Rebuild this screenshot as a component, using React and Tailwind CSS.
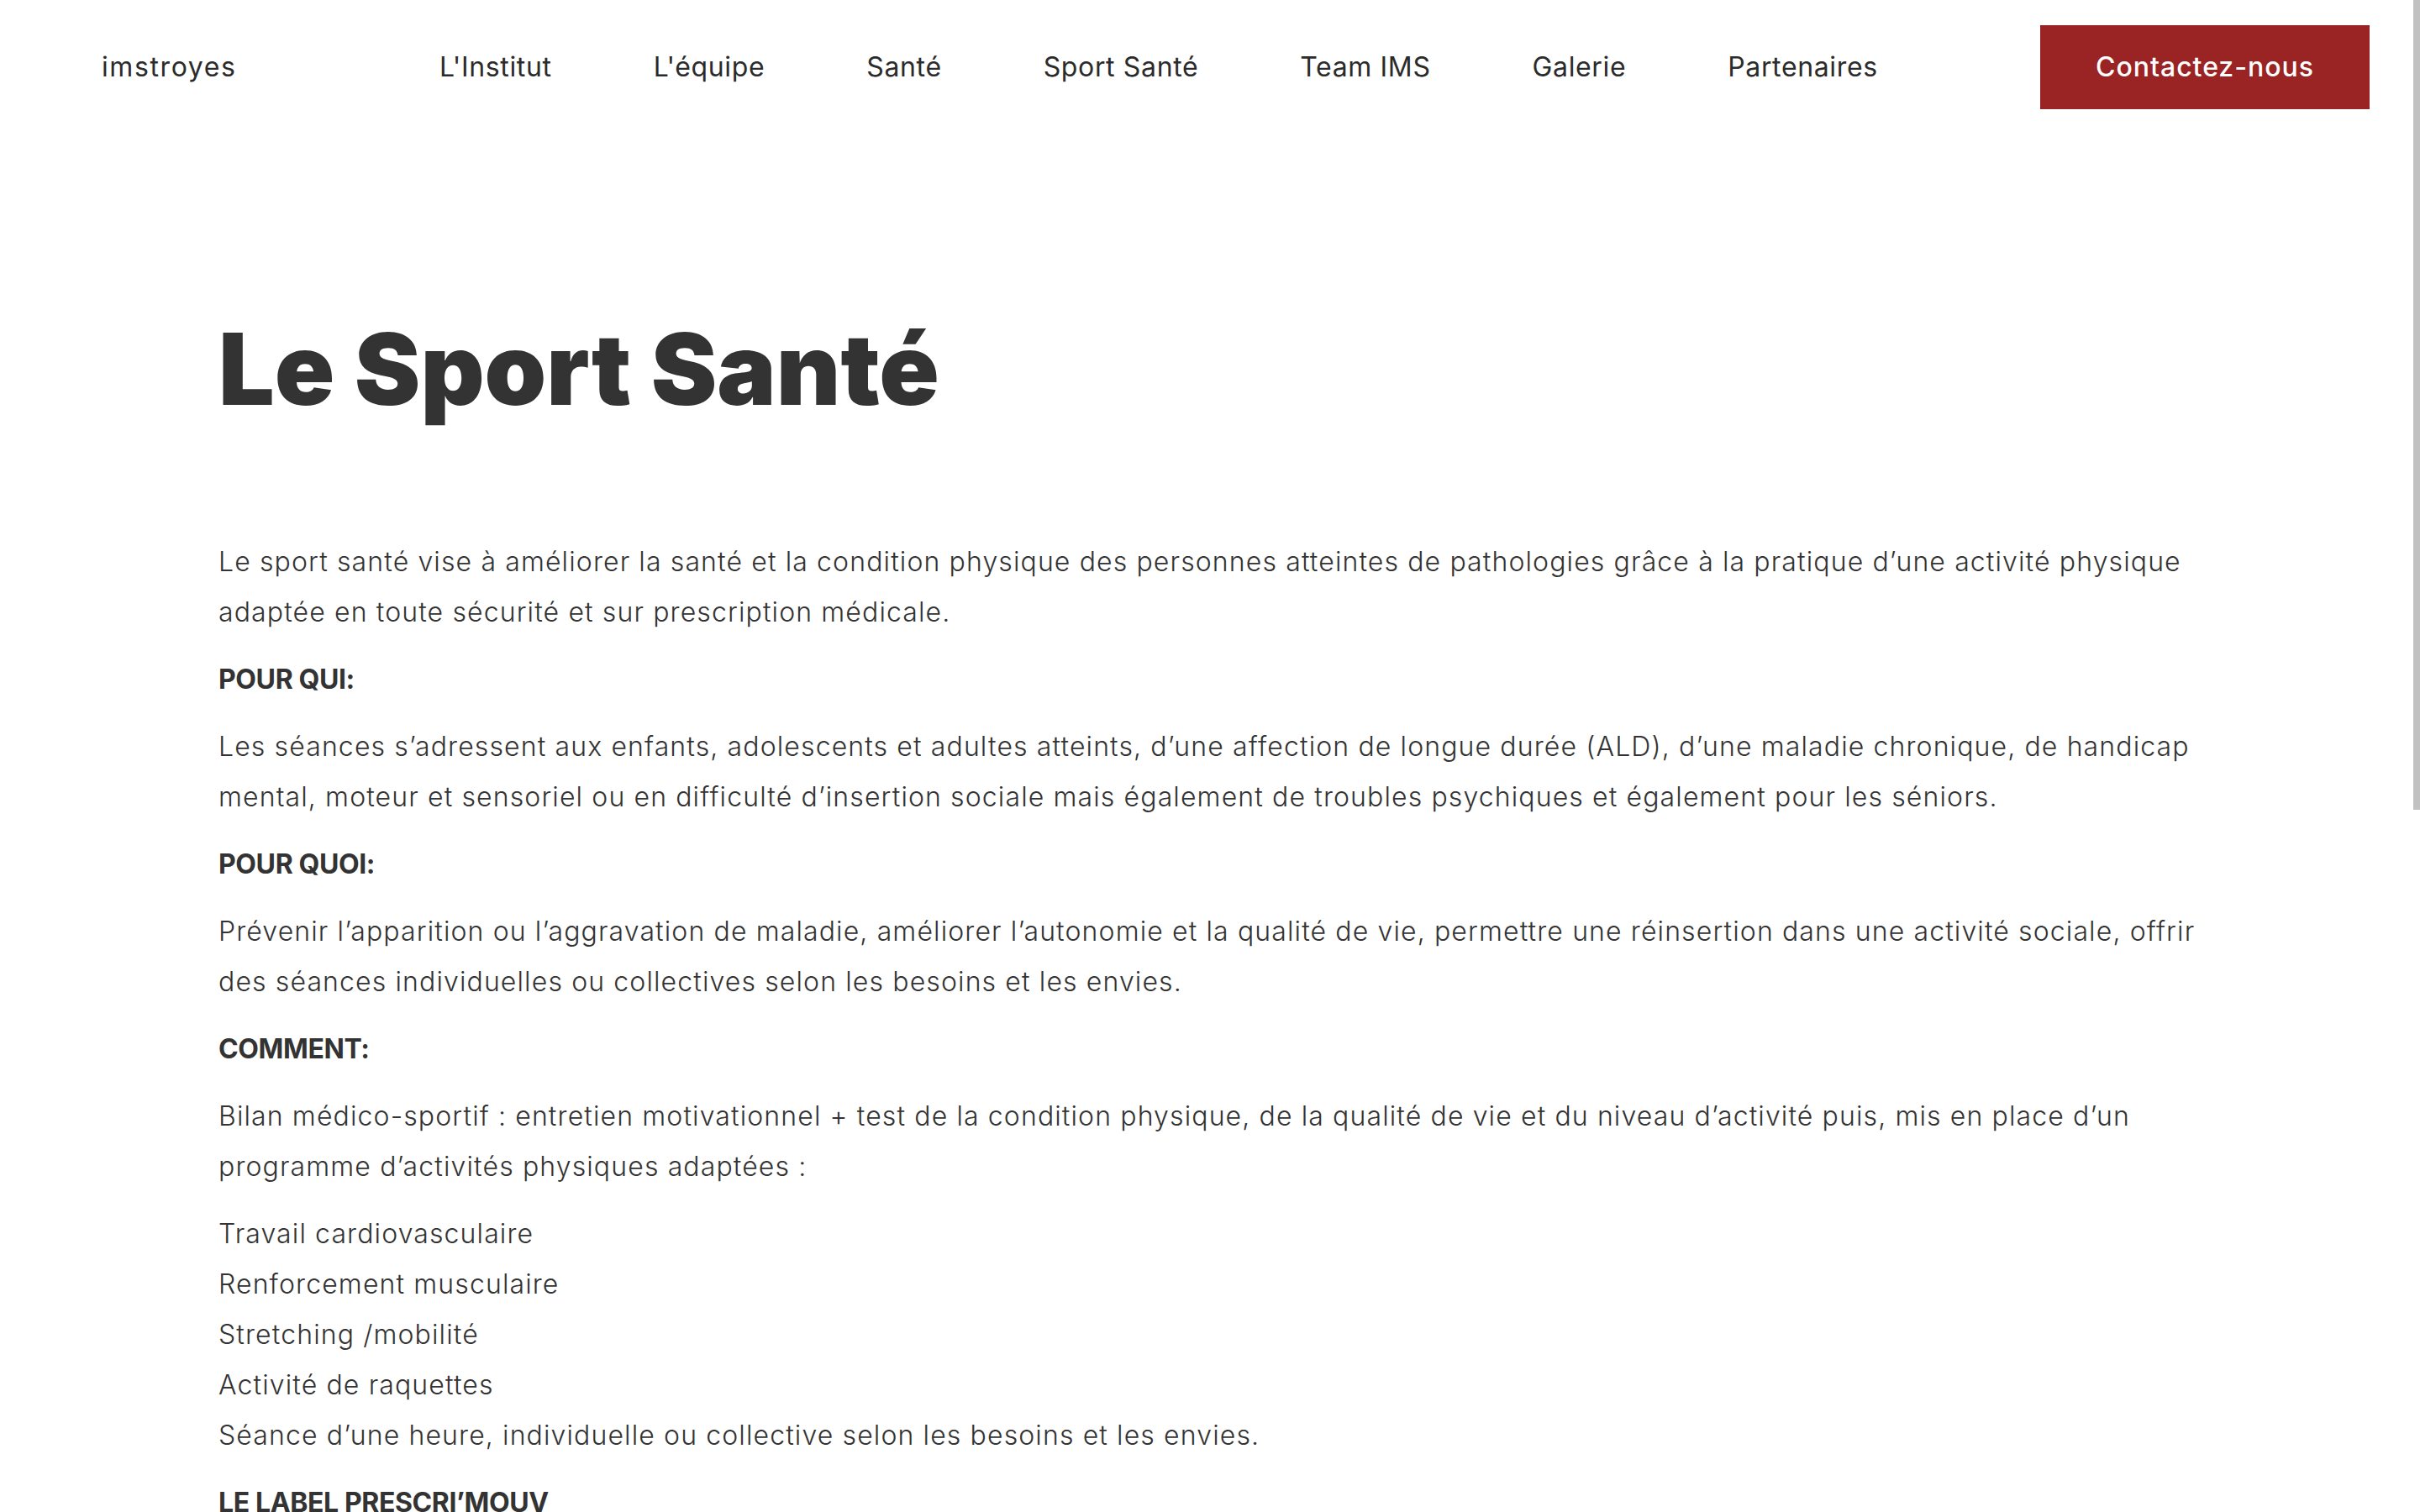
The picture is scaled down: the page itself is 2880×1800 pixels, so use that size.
import React from "react";

const navItems = ["L'Institut", "L'équipe", "Santé", "Sport Santé", "Team IMS", "Galerie", "Partenaires"];

function P({ children, className = "" }) {
  return <p className={"leading-[60px] mb-[20px] " + className}>{children}</p>;
}

function H({ children }) {
  return <p className="leading-[60px] mb-[20px] font-bold text-[#333333] tracking-[-0.012em]">{children}</p>;
}

export default function App() {
  return (
    <div className="relative min-h-screen bg-white text-[#333333] font-['Inter','Liberation_Sans',sans-serif]">
      <header className="flex h-[160px] items-center pl-[121px] pr-[60px]">
        <div className="w-[402px] text-[32px] tracking-[0.05em] text-[#2b2b2b]">imstroyes</div>
        <nav className="flex items-center gap-[121px] text-[32px] tracking-[0.02em] text-[#2b2b2b]">
          {navItems.map((item) => (
            <a key={item} className="whitespace-nowrap">{item}</a>
          ))}
        </nav>
        <a className="ml-auto flex h-[100px] w-[392px] items-center justify-center bg-[#9a2424] text-[32px] font-medium tracking-[0.03em] text-white">
          Contactez-nous
        </a>
      </header>

      <main className="pl-[260px] pr-[230px] pt-[220px] pb-[200px]">
        <h1 className="text-[118px] leading-none font-black tracking-[0em] text-[#333333]">Le Sport Santé</h1>

        <div className="mt-[141px] text-[32px] font-light tracking-[0.035em] text-[#333333]">
          <P>
            Le sport santé vise à améliorer la santé et la condition physique des personnes atteintes de pathologies grâce à la pratique d’une activité physique adaptée en toute sécurité et sur prescription médicale.
          </P>
          <H>POUR QUI:</H>
          <P>
            Les séances s’adressent aux enfants, adolescents et adultes atteints, d’une affection de longue durée (ALD), d’une maladie chronique, de handicap mental, moteur et sensoriel ou en difficulté d’insertion sociale mais également de troubles psychiques et également pour les séniors.
          </P>
          <H>POUR QUOI:</H>
          <P>
            Prévenir l’apparition ou l’aggravation de maladie, améliorer l’autonomie et la qualité de vie, permettre une réinsertion dans une activité sociale, offrir des séances individuelles ou collectives selon les besoins et les envies.
          </P>
          <H>COMMENT:</H>
          <P>
            Bilan médico-sportif : entretien motivationnel + test de la condition physique, de la qualité de vie et du niveau d’activité puis, mis en place d’un programme d’activités physiques adaptées :
          </P>
          <P>
            Travail cardiovasculaire
            <br />
            Renforcement musculaire
            <br />
            Stretching /mobilité
            <br />
            Activité de raquettes
            <br />
            Séance d’une heure, individuelle ou collective selon les besoins et les envies.
          </P>
          <H>LE LABEL PRESCRI’MOUV</H>
        </div>
      </main>

      <div className="fixed right-0 top-0 h-[964px] w-[8px] bg-[#c1c1c1]" />
    </div>
  );
}
